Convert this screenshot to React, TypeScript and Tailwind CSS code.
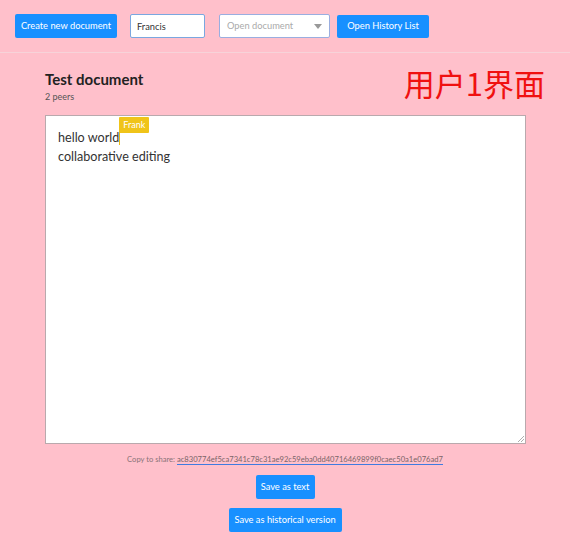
const font = { fontFamily: 'Lato, "Noto Sans", sans-serif' };

export default function App() {
    return (
        <div className="h-[556px] w-[570px] overflow-hidden bg-[#ffc0cb] text-[#333]" style={font}>
            <div className="flex h-[53px] items-center gap-[13px] border-b border-[#f7d3d9] px-[15px]">
                <button className="h-[24px] w-[102px] rounded-[2px] bg-[#1890ff] text-[9.3px] text-white">
                    Create new document
                </button>
                <input
                    readOnly
                    value="Francis"
                    className="h-[24px] w-[75px] rounded-[2px] border border-[#7aa7e0] bg-white px-[6px] text-[9.3px] text-[#333] outline-none"
                />
                <div className="ml-[1px] flex h-[24px] w-[111px] items-center justify-between rounded-[2px] border border-[#9aaee0] bg-white px-[7px] text-[9.3px] text-[#aaa]">
                    <span>Open document</span>
                    <svg width="8" height="5" viewBox="0 0 8 5">
                        <path d="M0 0h8L4 5z" fill="#999" />
                    </svg>
                </div>
                <button className="-ml-[6px] h-[23px] w-[92px] rounded-[2px] bg-[#1890ff] text-[9.3px] text-white">
                    Open History List
                </button>
            </div>

            <div className="px-[45px]">
                <div className="flex items-start justify-between pt-[16px]">
                    <div>
                        <h1 className="text-[15px] font-bold leading-[20px] text-[#222]">Test document</h1>
                        <div className="mt-[1px] text-[9px] text-[#555]">2 peers</div>
                    </div>
                    <div
                        className="-mr-[20px] mt-[-6px] text-[31px] leading-[40px] text-[#f01010]"
                        style={{ fontFamily: '"Noto Sans CJK SC", sans-serif' }}
                    >
                        用户1界面
                    </div>
                </div>

                <div className="relative mt-[11px] h-[329px] w-[481px] border border-[#b9a9ad] bg-white px-[12px] pt-[12px] text-[12.6px] leading-[19px] text-[#333]">
                    <div className="flex items-center">
                        <span>hello world</span>
                        <span className="relative inline-block h-[15px] w-[1px] bg-[#e8b914]">
                            <span className="absolute top-[3px] left-0 -translate-y-full whitespace-nowrap rounded-[1px] bg-[#f0c419] px-[4px] text-[9px] leading-[16px] text-white">
                                Frank
                            </span>
                        </span>
                    </div>
                    <div>collaborative editing</div>
                    <svg className="absolute bottom-[1px] right-[1px]" width="7" height="7" viewBox="0 0 7 7">
                        <path d="M7 1L1 7M7 4L4 7" stroke="#999" strokeWidth="0.8" />
                    </svg>
                </div>

                <div className="mt-[9px] flex flex-col items-center">
                    <div className="text-[7.6px] leading-[12px] text-[#8a7378]">
                        Copy to share:{" "}
                        <span className="border-b border-[#3f7be0] text-[#7a6468]">
                            ac830774ef5ca7341c78c31ae92c59eba0dd40716469899f0caec50a1e076ad7
                        </span>
                    </div>
                    <button className="mt-[10px] h-[24px] w-[59px] rounded-[2px] bg-[#1890ff] text-[9.3px] text-white">
                        Save as text
                    </button>
                    <button className="mt-[9px] h-[24px] w-[113px] rounded-[2px] bg-[#1890ff] text-[9.3px] text-white">
                        Save as historical version
                    </button>
                </div>
            </div>
        </div>
    );
}
